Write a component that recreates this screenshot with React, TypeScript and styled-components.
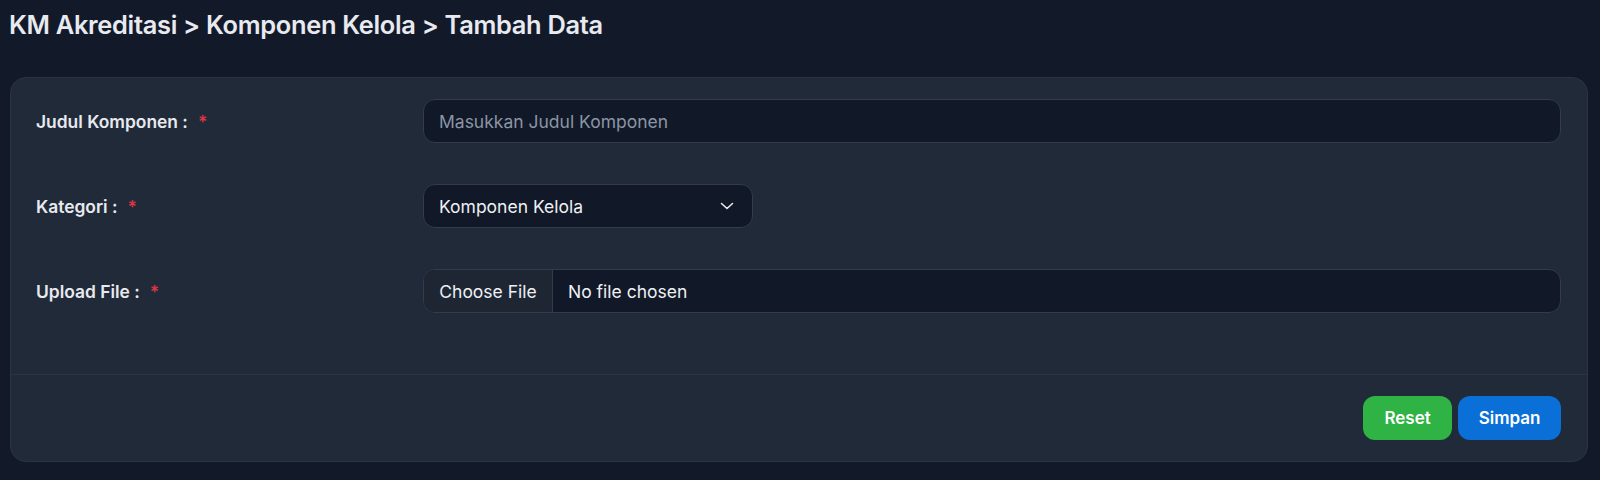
import React from "react";
import styled, { createGlobalStyle } from "styled-components";

const Global = createGlobalStyle`
  html, body { margin: 0; padding: 0; background: #111827; }
  body { font-family: Inter, "Noto Sans", sans-serif; color: #e5e7eb; }
  * { box-sizing: border-box; }
`;

const Page = styled.div`
  min-height: 480px;
  background: #121a2a;
  padding: 9px 12px 20px 10px;
`;

const Title = styled.h1`
  margin: 0 0 0 -1px;
  font-family: Inter, "Noto Sans", sans-serif;
  font-weight: 600;
  font-size: 25.4px;
  line-height: 32px;
  letter-spacing: -0.3px;
  color: #e8eaf0;
`;

const Card = styled.div`
  margin-top: 36px;
  background: #212a38;
  border: 1px solid #2b3444;
  border-radius: 16px;
  overflow: hidden;
`;

const Body = styled.div`
  padding: 21px 26px 61px 25px;
  display: flex;
  flex-direction: column;
  gap: 41px;
`;

const Row = styled.div`
  display: grid;
  grid-template-columns: 387px 1fr;
  align-items: center;
`;

const Label = styled.label`
  font-size: 17.4px;
  font-weight: 600;
  color: #e8eaf0;
  display: flex;
  align-items: center;
`;

const Star = styled.span`
  color: #dc3545;
  margin-left: 10px;
`;

const Input = styled.input`
  height: 44px;
  width: 100%;
  background: #111827;
  border: 1px solid #323c4c;
  border-radius: 12px;
  padding: 0 15px;
  font-family: Inter, sans-serif;
  font-size: 17.5px;
  color: #e5e7eb;
  outline: none;
  &::placeholder { color: #8b95a5; }
`;

const SelectBox = styled.div`
  height: 44px;
  width: 330px;
  background: #111827;
  border: 1px solid #323c4c;
  border-radius: 12px;
  padding: 0 18px 0 15px;
  display: flex;
  align-items: center;
  justify-content: space-between;
  font-size: 17.5px;
  color: #eef0f4;
`;

const FileBox = styled.div`
  height: 44px;
  width: 100%;
  background: #111827;
  border: 1px solid #323c4c;
  border-radius: 12px;
  display: flex;
  align-items: stretch;
  overflow: hidden;
  font-size: 17.5px;
  color: #eef0f4;
`;

const FileButton = styled.div`
  width: 129px;
  background: #1e2634;
  border-right: 1px solid #323c4c;
  display: flex;
  align-items: center;
  justify-content: center;
`;

const FileName = styled.div`
  display: flex;
  align-items: center;
  padding-left: 15px;
`;

const Footer = styled.div`
  border-top: 1px solid #2b3444;
  padding: 21px 26px 21px 26px;
  display: flex;
  justify-content: flex-end;
  gap: 6px;
`;

const Button = styled.button<{ $tone: "green" | "blue" }>`
  height: 44px;
  padding: 0 ${(p) => (p.$tone === "green" ? "21.5px" : "20.5px")};
  border: none;
  border-radius: 12px;
  background: ${(p) => (p.$tone === "green" ? "#2fb344" : "#0a6fd6")};
  color: #fff;
  font-family: Inter, sans-serif;
  font-weight: 600;
  font-size: 17px;
`;

export default function App() {
  return (
    <Page>
      <Global />
      <Title>KM Akreditasi &gt; Komponen Kelola &gt; Tambah Data</Title>
      <Card>
        <Body>
          <Row>
            <Label>
              Judul Komponen :<Star>*</Star>
            </Label>
            <Input placeholder="Masukkan Judul Komponen" />
          </Row>
          <Row>
            <Label>
              Kategori :<Star>*</Star>
            </Label>
            <SelectBox>
              <span>Komponen Kelola</span>
              <svg width="14" height="8" viewBox="0 0 14 8" fill="none">
                <path d="M1.5 1.5 L7 6.5 L12.5 1.5" stroke="#e5e7eb" strokeWidth="1.6" strokeLinecap="round" strokeLinejoin="round" />
              </svg>
            </SelectBox>
          </Row>
          <Row>
            <Label>
              Upload File :<Star>*</Star>
            </Label>
            <FileBox>
              <FileButton>Choose File</FileButton>
              <FileName>No file chosen</FileName>
            </FileBox>
          </Row>
        </Body>
        <Footer>
          <Button $tone="green">Reset</Button>
          <Button $tone="blue">Simpan</Button>
        </Footer>
      </Card>
    </Page>
  );
}
